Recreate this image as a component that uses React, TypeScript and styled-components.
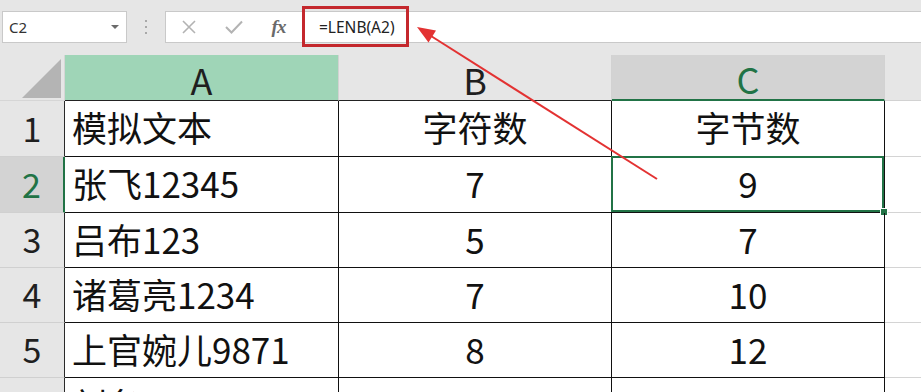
import React from "react";
import styled, { createGlobalStyle, css } from "styled-components";

const GREEN = "#217346";
const CJK = `"Noto Sans CJK SC", "Noto Sans", sans-serif`;

type Row = { n: number; a: string; b: string; c: string };
type Tone = "normal" | "selected" | "active" | "blank";

const rows: Row[] = [
  { n: 1, a: "模拟文本", b: "字符数", c: "字节数" },
  { n: 2, a: "张飞12345", b: "7", c: "9" },
  { n: 3, a: "吕布123", b: "5", c: "7" },
  { n: 4, a: "诸葛亮1234", b: "7", c: "10" },
  { n: 5, a: "上官婉儿9871", b: "8", c: "12" },
  { n: 6, a: "刘备99999", b: "7", c: "9" },
];

const activeRow = 2;

const GlobalStyle = createGlobalStyle`
  html, body {
    margin: 0;
    padding: 0;
    background: #ffffff;
  }
  * {
    box-sizing: border-box;
  }
`;

const Page = styled.div`
  position: relative;
  width: 921px;
  height: 392px;
  overflow: hidden;
  background: #ffffff;
`;

const Toolbar = styled.div`
  display: flex;
  align-items: flex-start;
  height: 55px;
  padding: 11px 0 0 2px;
  background: #e6e6e6;
  font-family: "Noto Sans", "Liberation Sans", sans-serif;
`;

const NameBox = styled.div`
  display: flex;
  align-items: center;
  justify-content: space-between;
  width: 125px;
  height: 32px;
  padding: 0 7px 0 6px;
  background: #ffffff;
  border: 1px solid #c9c9c9;
  font-size: 15px;
  color: #333333;
`;

const Caret = styled.span`
  width: 0;
  height: 0;
  border-left: 4px solid transparent;
  border-right: 4px solid transparent;
  border-top: 4px solid #6b6b6b;
`;

const Grip = styled.div`
  display: flex;
  align-items: center;
  justify-content: center;
  width: 38px;
  height: 32px;
`;

const FormulaBar = styled.div`
  display: flex;
  align-items: center;
  flex: 1;
  height: 32px;
  background: #ffffff;
  border: 1px solid #c9c9c9;
  border-right: none;
`;

const IconGroup = styled.div`
  display: flex;
  height: 100%;
`;

const IconButton = styled.div`
  display: flex;
  align-items: center;
  justify-content: center;
  width: 45px;
  height: 100%;
`;

const Fx = styled.span`
  font-family: "Liberation Serif", "DejaVu Serif", serif;
  font-style: italic;
  font-weight: bold;
  font-size: 19px;
  color: #6a6a6a;
  letter-spacing: -1px;
`;

const FormulaInput = styled.div`
  display: flex;
  align-items: center;
  height: 100%;
  padding-left: 18px;
`;

const Formula = styled.span`
  position: relative;
  font-size: 15.5px;
  color: #222222;

  &::after {
    content: "";
    position: absolute;
    top: -10px;
    bottom: -9px;
    left: -17px;
    right: -14px;
    border: 3px solid #c4282d;
  }
`;

const Grid = styled.div`
  display: grid;
  grid-template-columns: 65px 274px 273px 273px 1fr;
  grid-template-rows: 46px 56px 56px 55px 55px 55px 55px;
  font-family: ${CJK};
`;

const Corner = styled.div`
  display: flex;
  align-items: flex-end;
  justify-content: flex-end;
  padding: 0 3px 2px 0;
  background: #e6e6e6;
  border-right: 1px solid #d6d6d6;
  border-bottom: 1px solid #d6d6d6;
`;

const Triangle = styled.div`
  width: 39px;
  height: 39px;
  background: #b4b4b4;
  clip-path: polygon(100% 0, 100% 100%, 0 100%);
`;

const ColHeader = styled.div<{ $tone: Tone }>`
  display: flex;
  align-items: center;
  justify-content: center;
  padding-top: 2px;
  font-size: 36px;
  line-height: 1;
  color: #1f1f1f;
  background: #e6e6e6;
  border-right: 1px solid #d2d2d2;
  border-bottom: 1px solid #222222;

  ${(p) =>
    p.$tone === "selected" &&
    css`
      background: #9fd5b7;
    `}
  ${(p) =>
    p.$tone === "active" &&
    css`
      background: #d3d3d3;
      color: ${GREEN};
      border-bottom: 2px solid ${GREEN};
    `}
  ${(p) =>
    p.$tone === "blank" &&
    css`
      border-right: none;
      border-bottom: 1px solid #d2d2d2;
    `}
`;

const RowHeader = styled.div<{ $active?: boolean }>`
  display: flex;
  align-items: center;
  justify-content: center;
  padding-bottom: 2px;
  font-size: 34px;
  line-height: 1;
  color: #1f1f1f;
  background: ${(p) => (p.$active ? "#d3d3d3" : "#e6e6e6")};
  border-right: 1px solid ${(p) => (p.$active ? GREEN : "#2a2a2a")};
  border-bottom: 1px solid #d0d0d0;
  ${(p) =>
    p.$active &&
    css`
      color: ${GREEN};
      border-right-width: 2px;
    `}
`;

const Cell = styled.div<{ $align: "left" | "center"; $active?: boolean }>`
  position: relative;
  display: flex;
  align-items: center;
  justify-content: ${(p) => (p.$align === "left" ? "flex-start" : "center")};
  padding-left: ${(p) => (p.$align === "left" ? "7px" : "0")};
  padding-bottom: 4px;
  font-size: 35px;
  line-height: 1;
  color: #111111;
  white-space: nowrap;
  border-right: 1px solid #111111;
  border-bottom: 1px solid #111111;

  ${(p) =>
    p.$active &&
    css`
      &::before {
        content: "";
        position: absolute;
        top: -1px;
        left: -1px;
        right: 0;
        bottom: 0;
        border: 2px solid ${GREEN};
      }
      &::after {
        content: "";
        position: absolute;
        right: -4px;
        bottom: -4px;
        width: 6px;
        height: 6px;
        background: ${GREEN};
        border: 1px solid #ffffff;
      }
    `}
`;

const EmptyCell = styled.div`
  background: #ffffff;
  border-bottom: 1px solid #d4d4d4;
`;

const Arrow = styled.svg`
  position: absolute;
  left: 0;
  top: 0;
  pointer-events: none;
`;

export default function App() {
  return (
    <>
      <GlobalStyle />
      <Page>
        <Toolbar>
          <NameBox>
            <span>C2</span>
            <Caret />
          </NameBox>
          <Grip>
            <svg width="4" height="16" viewBox="0 0 4 16">
              <rect x="1" y="1" width="2" height="2" fill="#a8a8a8" />
              <rect x="1" y="7" width="2" height="2" fill="#a8a8a8" />
              <rect x="1" y="13" width="2" height="2" fill="#a8a8a8" />
            </svg>
          </Grip>
          <FormulaBar>
            <IconGroup>
              <IconButton>
                <svg width="16" height="16" viewBox="0 0 16 16">
                  <path d="M2 2 L14 14 M14 2 L2 14" stroke="#b3b3b3" strokeWidth="1.6" fill="none" />
                </svg>
              </IconButton>
              <IconButton>
                <svg width="18" height="14" viewBox="0 0 18 14">
                  <path d="M1 7 L6.5 12.5 L17 1.5" stroke="#b3b3b3" strokeWidth="2" fill="none" />
                </svg>
              </IconButton>
              <IconButton>
                <Fx>fx</Fx>
              </IconButton>
            </IconGroup>
            <FormulaInput>
              <Formula>=LENB(A2)</Formula>
            </FormulaInput>
          </FormulaBar>
        </Toolbar>

        <Grid>
          <Corner>
            <Triangle />
          </Corner>
          <ColHeader $tone="selected">A</ColHeader>
          <ColHeader $tone="normal">B</ColHeader>
          <ColHeader $tone="active">C</ColHeader>
          <ColHeader $tone="blank" />

          {rows.map((r) => (
            <React.Fragment key={r.n}>
              <RowHeader $active={r.n === activeRow}>{r.n}</RowHeader>
              <Cell $align="left">{r.a}</Cell>
              <Cell $align="center">{r.b}</Cell>
              <Cell $align="center" $active={r.n === activeRow}>
                {r.c}
              </Cell>
              <EmptyCell />
            </React.Fragment>
          ))}
        </Grid>

        <Arrow viewBox="0 0 921 392" width="921" height="392">
          <line x1="657" y1="179" x2="431" y2="36" stroke="#e33232" strokeWidth="2" />
          <polygon points="417,27 436,30.5 428.5,42.5" fill="#e33232" />
        </Arrow>
      </Page>
    </>
  );
}
